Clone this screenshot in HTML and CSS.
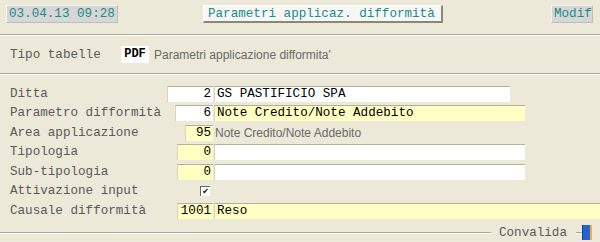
FILE: index.html
```html
<!DOCTYPE html>
<html lang="it">
<head>
  <meta charset="UTF-8">
  <title>Parametri applicaz. difformità</title>
  <link rel="stylesheet" href="styles.css">
</head>
<body>
  <!-- Top bar: date, title, mode -->
  <header class="topbar">
    <div class="stamp">03.04.13 09:28</div>
    <div class="title">Parametri applicaz. difformità</div>
    <div class="mode">Modif</div>
  </header>
  <div class="sep"></div>

  <!-- Tabella -->
  <section class="tipo">
    <span class="lbl">Tipo tabelle</span>
    <span class="code">PDF</span>
    <span class="desc">Parametri applicazione difformita'</span>
  </section>
  <div class="sep"></div>

  <!-- Campi -->
  <section class="form">
    <div class="row">
      <span class="lbl">Ditta</span>
      <span class="num white w46">2</span>
      <span class="fld white w296">GS PASTIFICIO SPA</span>
    </div>
    <div class="row">
      <span class="lbl">Parametro difformità</span>
      <span class="num white w38">6</span>
      <span class="fld yellow w311">Note Credito/Note Addebito</span>
    </div>
    <div class="row">
      <span class="lbl">Area applicazione</span>
      <span class="num yellow w28">95</span>
      <span class="desc">Note Credito/Note Addebito</span>
    </div>
    <div class="row">
      <span class="lbl">Tipologia</span>
      <span class="num yellow w36">0</span>
      <span class="fld white w311"></span>
    </div>
    <div class="row">
      <span class="lbl">Sub-tipologia</span>
      <span class="num yellow w36">0</span>
      <span class="fld white w311"></span>
    </div>
    <div class="row">
      <span class="lbl">Attivazione input</span>
      <span class="chk-cell"><span class="chk">&#10004;</span></span>
      <span></span>
    </div>
    <div class="row">
      <span class="lbl">Causale difformità</span>
      <span class="num yellow w36">1001</span>
      <span class="fld yellow wfull">Reso</span>
    </div>
  </section>

  <!-- Footer -->
  <footer class="foot">
    <span class="line"></span>
    <span class="conv">Convalida</span>
    <span class="line short"></span>
    <span class="ind"></span>
  </footer>
</body>
</html>
```
FILE: styles.css
```css
/* Base */
* { box-sizing: border-box; margin: 0; padding: 0; }
body {
  background: #ece9d8;
  font-family: 'Liberation Mono', 'Courier New', monospace;
  font-size: 12.6px;
  color: #5a5a5a;
  width: 600px;
  height: 242px;
  overflow: hidden;
}
/* Top bar */
.topbar {
  display: flex;
  align-items: flex-start;
  height: 34px;
  padding: 5px 7px 0 6px;
}
.stamp, .title, .mode {
  height: 18px;
  line-height: 17px;
  color: #1a8a8a;
  font-size: 12.6px;
  padding: 0 2px;
  white-space: nowrap;
}
.stamp {
  width: 112px;
  background: #d6d6d6;
  border: 1px solid #f4f4f4;
  border-right-color: #bdbdbd;
  border-bottom-color: #bdbdbd;
}
.title {
  width: 240px;
  margin-left: 85px;
  padding-left: 4px;
  background: #f7f7f5;
  border: 1px solid #fff;
  border-right: 2px solid #8a8778;
  border-bottom: 2px solid #8a8778;
}
.mode {
  width: 42px;
  margin-left: auto;
  background: #d6d6d6;
  border: 1px solid #f4f4f4;
  border-right-color: #bdbdbd;
  border-bottom-color: #bdbdbd;
}
/* Separators */
.sep {
  border-top: 1px solid #aca899;
  border-bottom: 1px solid #fff;
}
/* Tipo tabelle */
.tipo {
  display: flex;
  align-items: center;
  height: 37px;
  padding-left: 10px;
}
.tipo .lbl { width: 111px; }
.code {
  width: 28px;
  height: 17px;
  line-height: 17px;
  background: #fff;
  color: #000;
  font-weight: bold;
  text-align: center;
  font-size: 12px;
}
.desc {
  font-family: 'Liberation Sans', Arial, sans-serif;
  font-size: 12px;
  color: #6a6a6a;
  padding-left: 5px;
  white-space: nowrap;
}
/* Form rows */
.form { padding-top: 9px; }
.row {
  display: grid;
  grid-template-columns: 157px 46px 1fr;
  align-items: center;
  height: 19.5px;
  padding-left: 10px;
}
.lbl { white-space: nowrap; }
.num, .fld {
  height: 16px;
  line-height: 15px;
  color: #000;
  border-top: 1px solid #b4b0a0;
  border-left: 1px solid #d8d5c6;
  white-space: nowrap;
}
.num {
  justify-self: end;
  text-align: right;
  padding-right: 2px;
  font-size: 12.6px;
}
.fld {
  margin-left: 1px;
  padding-left: 2px;
  font-size: 12.6px;
}
.row .desc { padding-left: 2px; }
.white { background: #fff; }
.yellow { background: #ffffc4; }
.w46 { width: 46px; }
.w38 { width: 38px; }
.w36 { width: 36px; }
.w28 { width: 28px; }
.w296 { width: 296px; }
.w311 { width: 311px; }
.wfull { width: 387px; }
/* Checkbox */
.chk-cell {
  justify-self: end;
  padding-right: 3px;
}
.chk {
  display: block;
  width: 10px;
  height: 10px;
  background: #fff;
  border-top: 1px solid #666;
  border-left: 1px solid #666;
  color: #000;
  font-family: 'DejaVu Sans', sans-serif;
  font-size: 8px;
  line-height: 9px;
  text-align: center;
}
/* Footer */
.foot {
  display: flex;
  align-items: center;
  height: 18px;
  margin-top: 3px;
}
.foot .line {
  flex: 1;
  border-top: 1px solid #aca899;
  border-bottom: 1px solid #fff;
}
.foot .line.short { flex: 0 0 6px; }
.conv {
  padding: 0 9px 0 8px;
  color: #5a5a5a;
}
.ind {
  width: 10px;
  height: 15px;
  margin-right: 8px;
  background: #2862d0;
  border-left: 1px solid #1c3f8c;
  border-right: 2px solid #f0b040;
}
```
